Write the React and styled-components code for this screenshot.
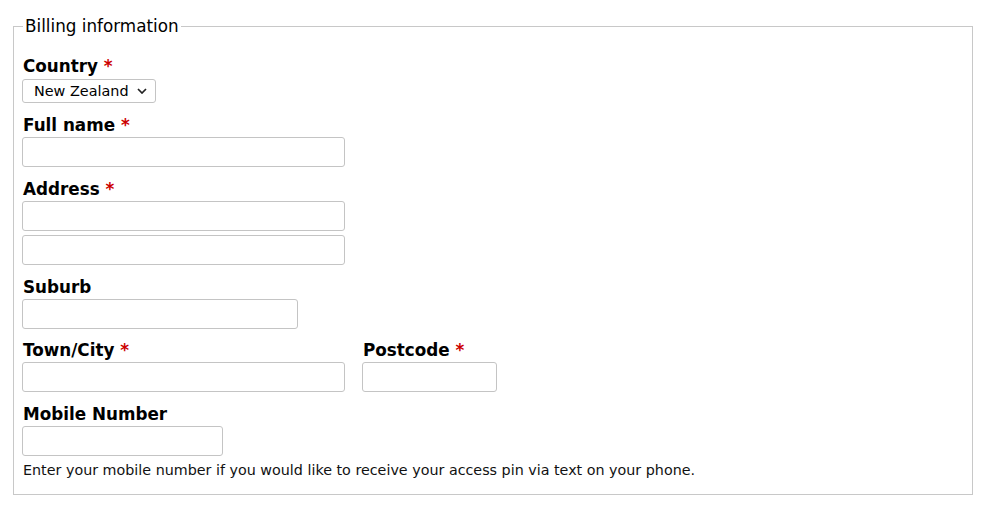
import React from "react";
import styled, { createGlobalStyle } from "styled-components";

const GlobalStyle = createGlobalStyle`
  body {
    margin: 8px;
    font-family: "DejaVu Sans", "Liberation Sans", sans-serif;
    color: #000;
    background: #fff;
  }
`;

export default function App() {
  return (
    <>
      <GlobalStyle />
      <Fieldset>
        <Legend>Billing information</Legend>

        <Field>
          <Label required>Country</Label>
          <SelectWrap>
            <Select defaultValue="NZ">
              <option value="NZ">New Zealand</option>
              <option value="AU">Australia</option>
            </Select>
            <Chevron viewBox="0 0 10 6" aria-hidden="true">
              <path d="M1 1l4 4 4-4" />
            </Chevron>
          </SelectWrap>
        </Field>

        <Field>
          <Label required>Full name</Label>
          <Input $width={323} />
        </Field>

        <Field>
          <Label required>Address</Label>
          <Input $width={323} />
          <Input $width={323} $stacked />
        </Field>

        <Field>
          <Label>Suburb</Label>
          <Input $width={276} />
        </Field>

        <Row>
          <Field>
            <Label required>Town/City</Label>
            <Input $width={323} />
          </Field>
          <Field>
            <Label required>Postcode</Label>
            <Input $width={135} />
          </Field>
        </Row>

        <Field>
          <Label>Mobile Number</Label>
          <Input $width={201} type="tel" />
          <Help>
            Enter your mobile number if you would like to receive your access pin via text on your phone.
          </Help>
        </Field>
      </Fieldset>
    </>
  );
}

const Label = ({ children, required }) => (
  <LabelText>
    {children}
    {required && <Req> *</Req>}
  </LabelText>
);

// Styled Components
const Fieldset = styled.fieldset`
  margin: 8px 7px 0 5px;
  padding: 8px 8px 15px 8px;
  border: 1px solid #c8c8c8;
  min-width: 0;
`;

const Legend = styled.legend`
  font-size: 16.8px;
  padding: 0 2px;
  margin-left: 1px;
  line-height: 20px;
`;

const Row = styled.div`
  display: flex;
  gap: 17px;
`;

const Field = styled.div`
  display: flex;
  flex-direction: column;
  align-items: flex-start;
  margin-top: 12px;
  ${Row} > & {
    margin-top: 11px;
  }
`;

const LabelText = styled.label`
  font-size: 16.8px;
  font-weight: bold;
  line-height: 20px;
  margin-bottom: 2px;
  margin-left: 1px;
`;

const Req = styled.span`
  color: #cc0000;
`;

const SelectWrap = styled.div`
  position: relative;
  display: inline-block;
  margin-top: 1px;
`;

const Select = styled.select`
  appearance: none;
  -webkit-appearance: none;
  display: block;
  font-family: "DejaVu Sans", sans-serif;
  font-size: 14.4px;
  color: #000;
  height: 24px;
  width: 134px;
  padding: 0 20px 0 11px;
  border: 1px solid #c4c4c4;
  border-radius: 3px;
  background: #fff;
`;

const Chevron = styled.svg`
  position: absolute;
  right: 9px;
  top: 9px;
  width: 10px;
  height: 6px;
  fill: none;
  stroke: #222;
  stroke-width: 1.7;
  pointer-events: none;
`;

const Input = styled.input`
  box-sizing: border-box;
  width: ${(p) => p.$width}px;
  height: 30px;
  margin: ${(p) => (p.$stacked ? "4px" : "0")} 0 0 0;
  border: 1px solid #c4c4c4;
  border-radius: 3px;
  font-family: "DejaVu Sans", sans-serif;
  font-size: 14px;
  padding: 0 6px;
  background: #fff;
`;

const Help = styled.div`
  font-size: 14.3px;
  line-height: 18px;
  margin-top: 5px;
  margin-left: 1px;
  color: #111;
`;
